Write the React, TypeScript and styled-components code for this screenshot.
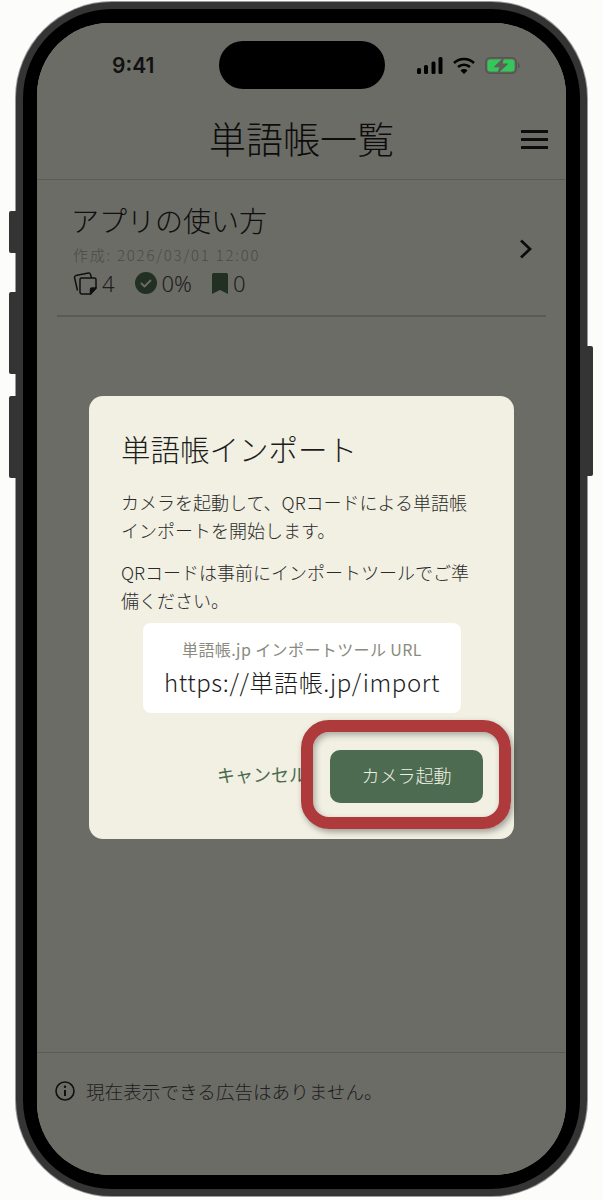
import styled, { createGlobalStyle } from "styled-components";

const GlobalStyle = createGlobalStyle`
  html, body {
    margin: 0;
    background: #fcfcfa;
  }
  * {
    box-sizing: border-box;
  }
`;

const Page = styled.div`
  width: 603px;
  height: 1200px;
  padding: 2px 16px 4px;
  font-family: "Noto Sans CJK JP", "Noto Sans", sans-serif;
`;

const Phone = styled.div`
  position: relative;
  width: 571px;
  height: 1194px;
  padding: 7px;
  background: #343434;
  border-radius: 96px;
  box-shadow: 0 0 0 1px #9a9a9a;
`;

const SideButton = styled.span<{ $side: "left" | "right"; $top: number; $height: number }>`
  position: absolute;
  top: ${(p) => p.$top}px;
  height: ${(p) => p.$height}px;
  width: 7px;
  background: #343434;
  ${(p) => (p.$side === "left" ? "left: -7px; border-radius: 2px 0 0 2px;" : "right: -6px; border-radius: 0 2px 2px 0;")}
`;

const Bezel = styled.div`
  height: 100%;
  padding: 14px;
  background: #000;
  border-radius: 89px;
`;

const Screen = styled.div`
  position: relative;
  display: flex;
  flex-direction: column;
  height: 100%;
  overflow: hidden;
  background: #f0efe3;
  border-radius: 72px;
  color: #222;
`;

const StatusBar = styled.div`
  position: relative;
  z-index: 2;
  display: grid;
  grid-template-columns: 1fr 166px 1fr;
  align-items: center;
  padding-top: 18px;
`;

const Time = styled.div`
  padding-left: 75px;
  font-family: "Inter", "Liberation Sans", sans-serif;
  font-size: 21px;
  font-weight: 600;
  color: #111;
`;

const Island = styled.div`
  height: 48px;
  background: #000;
  border-radius: 24px;
`;

const StatusIcons = styled.div`
  display: flex;
  align-items: center;
  gap: 10px;
  padding-left: 32px;
`;

const Header = styled.header`
  display: grid;
  grid-template-columns: 1fr auto 1fr;
  align-items: center;
  height: 91px;
  padding: 8px 18px 0;
  border-bottom: 1px solid #cfcdaf;
`;

const Title = styled.h1`
  grid-column: 2;
  margin: 0;
  font-size: 37px;
  font-weight: 300;
  line-height: 1;
  color: #1c1c1c;
`;

const MenuButton = styled.div`
  justify-self: end;
  display: flex;
  flex-direction: column;
  gap: 5px;
  width: 27px;
  margin-top: 3px;
`;

const MenuLine = styled.span`
  height: 3px;
  background: #1c1c1c;
`;

const Main = styled.main`
  flex: 1;
  padding: 0 20px;
`;

const ListItem = styled.div`
  display: flex;
  align-items: center;
  justify-content: space-between;
  height: 137px;
  padding: 3px 14px 0 16px;
  border-bottom: 2px solid #c9c8bc;
`;

const ItemTitle = styled.div`
  margin-left: -2px;
  font-size: 28px;
  font-weight: 300;
  line-height: 36px;
  color: #222;
`;

const ItemDate = styled.div`
  font-size: 15px;
  font-weight: 300;
  line-height: 18px;
  margin-top: 8px;
  letter-spacing: 1.75px;
  color: #a9a79a;
`;

const Stats = styled.div`
  display: flex;
  align-items: center;
  margin-top: 6px;
  font-family: "Noto Sans", sans-serif;
  font-size: 22px;
  font-weight: 300;
  line-height: 26px;
  color: #444;
`;

const Stat = styled.span`
  display: flex;
  align-items: center;
  gap: 5px;
  margin-right: 20px;
`;

const AdBar = styled.footer`
  display: flex;
  align-items: flex-start;
  gap: 11px;
  height: 123px;
  padding: 26px 0 0 18px;
  border-top: 1px solid #cfcdaf;
  font-size: 18.6px;
  font-weight: 300;
  line-height: 24px;
  color: #444;
`;

const Overlay = styled.div`
  position: absolute;
  inset: 0;
  padding-top: 373px;
  display: flex;
  justify-content: center;
  align-items: flex-start;
  background: rgba(0, 0, 0, 0.55);
`;

const Dialog = styled.section`
  position: relative;
  width: 425px;
  height: 443px;
  padding: 31px 32px 0 33px;
  background: #f1f0e3;
  border-radius: 14px;
`;

const DialogTitle = styled.h2`
  margin: 0 0 19px -1px;
  font-size: 29.5px;
  font-weight: 300;
  line-height: 42px;
  color: #1c1c1c;
`;

const Paragraph = styled.p`
  margin: 0 0 14px -1px;
  font-size: 18px;
  font-weight: 300;
  line-height: 28px;
  color: #2a2a2a;
`;

const UrlBox = styled.div`
  display: flex;
  flex-direction: column;
  align-items: center;
  width: 318px;
  height: 90px;
  margin: -5px 0 0 21px;
  padding-top: 13px;
  background: #fff;
  border-radius: 8px;
`;

const UrlLabel = styled.div`
  font-size: 16px;
  line-height: 26px;
  letter-spacing: 0.4px;
  color: #8b8a80;
`;

const UrlText = styled.div`
  font-size: 24px;
  line-height: 34px;
  margin-top: 3px;
  font-weight: 300;
  letter-spacing: 0.6px;
  color: #1c1c1c;
`;

const Actions = styled.div`
  display: flex;
  align-items: center;
  justify-content: flex-end;
  gap: 23px;
  margin: 37px -1px 0 0;
`;

const TextButton = styled.div`
  padding-bottom: 5px;
  font-size: 18px;
  font-weight: 400;
  color: #4c6b50;
`;

const PrimaryButton = styled.div`
  display: flex;
  align-items: center;
  justify-content: center;
  width: 153px;
  height: 53px;
  padding-bottom: 4px;
  background: #4c6b50;
  border-radius: 10px;
  font-size: 18px;
  font-weight: 300;
  color: #f0efe3;
`;

const Highlight = styled.div`
  position: absolute;
  left: 212px;
  top: 324px;
  width: 210px;
  height: 109px;
  border: 12px solid #ae3a3b;
  border-radius: 28px;
  box-shadow: 2px 3px 6px rgba(0, 0, 0, 0.35), inset 2px 3px 6px rgba(0, 0, 0, 0.3);
`;

const DarkIcon = styled.svg`
  flex: none;
  display: block;
`;

function SignalIcon() {
  return (
    <DarkIcon width="26" height="17" viewBox="0 0 26 17" fill="#000">
      <rect x="0" y="11" width="4" height="6" rx="1.5" />
      <rect x="7" y="8" width="4" height="9" rx="1.5" />
      <rect x="14.500" y="4.500" width="4" height="12.500" rx="1.5" />
      <rect x="21.500" y="0" width="4" height="17" rx="1.5" />
    </DarkIcon>
  );
}

function WifiIcon() {
  return (
    <DarkIcon width="22" height="17" viewBox="0 0 22 17" fill="none" stroke="#000" strokeWidth="2.500">
      <path d="M1 6a14.500 14.500 0 0 1 20 0" />
      <path d="M5 10a9 9 0 0 1 12 0" />
      <path d="M7.500 13.500 11 17l3.500-3.500a5 5 0 0 0-7 0z" fill="#000" stroke="none" />
    </DarkIcon>
  );
}

function BatteryIcon() {
  return (
    <DarkIcon width="35" height="17" viewBox="0 0 35 17" fill="none">
      <rect x="0.800" y="0.800" width="30.400" height="15.400" rx="4.500" stroke="#55544f" strokeWidth="1.600" />
      <rect x="2.500" y="2.500" width="27" height="12" rx="3" fill="#34c759" />
      <path d="M33 5.500v6c1-.4 1.700-1.500 1.700-3S34 5.900 33 5.500z" fill="#55544f" />
      <path d="M18.500 1 9.500 9.800h5.500l-2 6.200 9.500-9h-5.500z" fill="#5f5e58" stroke="#5f5e58" strokeWidth="1" strokeLinejoin="round" />
    </DarkIcon>
  );
}

function CardsIcon() {
  return (
    <DarkIcon width="24" height="24" viewBox="0 0 24 24" fill="none" stroke="#222" strokeWidth="1.500" strokeLinejoin="round">
      <path d="M4.500 19.500 1.500 6.500Q1.300 5 2.800 4.600L15.500 2Q17 1.800 17.500 3.500L18.500 7" />
      <path d="M7 21V8.500Q7 7 8.500 7H21.500Q23 7 23 8.500V17L17.500 23H9Q7 23 7 21Z" />
      <path d="M23 17h-4Q17.500 17 17.500 18.500V23Z" fill="#222" />
    </DarkIcon>
  );
}

function CheckIcon() {
  return (
    <DarkIcon width="22" height="22" viewBox="0 0 22 22">
      <circle cx="11" cy="11" r="11" fill="#4c6b50" />
      <path d="M6.500 11.500l3 3 6-6" fill="none" stroke="#f0efe3" strokeWidth="1.800" strokeLinecap="round" strokeLinejoin="round" />
    </DarkIcon>
  );
}

function BookmarkIcon() {
  return (
    <DarkIcon width="16" height="21" viewBox="0 0 16 21">
      <path d="M1.500 0h13Q16 0 16 1.500V21L8 17 0 21V1.500Q0 0 1.500 0Z" fill="#4c6b50" />
    </DarkIcon>
  );
}

function ChevronIcon() {
  return (
    <DarkIcon width="13" height="20" viewBox="0 0 13 20" fill="none" stroke="#1c1c1c" strokeWidth="2.800">
      <path d="M2 1.500 11 10 2 18.500" />
    </DarkIcon>
  );
}

function InfoIcon() {
  return (
    <DarkIcon width="20" height="24" viewBox="0 0 20 24" fill="none" stroke="#222" strokeWidth="1.600">
      <circle cx="10" cy="12" r="9" />
      <path d="M10 11v6" strokeWidth="2" />
      <circle cx="10" cy="7.800" r="1.200" fill="#222" stroke="none" />
    </DarkIcon>
  );
}

export default function App() {
  return (
    <Page>
      <GlobalStyle />
      <Phone>
        <SideButton $side="left" $top={209} $height={42} />
        <SideButton $side="left" $top={290} $height={82} />
        <SideButton $side="left" $top={394} $height={82} />
        <SideButton $side="right" $top={344} $height={130} />
        <Bezel>
          <Screen>
            <StatusBar>
              <Time>9:41</Time>
              <Island />
              <StatusIcons>
                <SignalIcon />
                <WifiIcon />
                <BatteryIcon />
              </StatusIcons>
            </StatusBar>
            <Header>
              <Title>単語帳一覧</Title>
              <MenuButton>
                <MenuLine />
                <MenuLine />
                <MenuLine />
              </MenuButton>
            </Header>
            <Main>
              <ListItem>
                <div>
                  <ItemTitle>アプリの使い方</ItemTitle>
                  <ItemDate>作成: 2026/03/01 12:00</ItemDate>
                  <Stats>
                    <Stat>
                      <CardsIcon />4
                    </Stat>
                    <Stat>
                      <CheckIcon />0%
                    </Stat>
                    <Stat>
                      <BookmarkIcon />0
                    </Stat>
                  </Stats>
                </div>
                <ChevronIcon />
              </ListItem>
            </Main>
            <AdBar>
              <InfoIcon />
              現在表示できる広告はありません。
            </AdBar>
            <Overlay>
              <Dialog>
                <DialogTitle>単語帳インポート</DialogTitle>
                <Paragraph>
                  カメラを起動して、QRコードによる単語帳
                  <br />
                  インポートを開始します。
                </Paragraph>
                <Paragraph>
                  QRコードは事前にインポートツールでご準
                  <br />
                  備ください。
                </Paragraph>
                <UrlBox>
                  <UrlLabel>単語帳.jp インポートツール URL</UrlLabel>
                  <UrlText>https://単語帳.jp/import</UrlText>
                </UrlBox>
                <Actions>
                  <TextButton>キャンセル</TextButton>
                  <PrimaryButton>カメラ起動</PrimaryButton>
                </Actions>
                <Highlight />
              </Dialog>
            </Overlay>
          </Screen>
        </Bezel>
      </Phone>
    </Page>
  );
}
